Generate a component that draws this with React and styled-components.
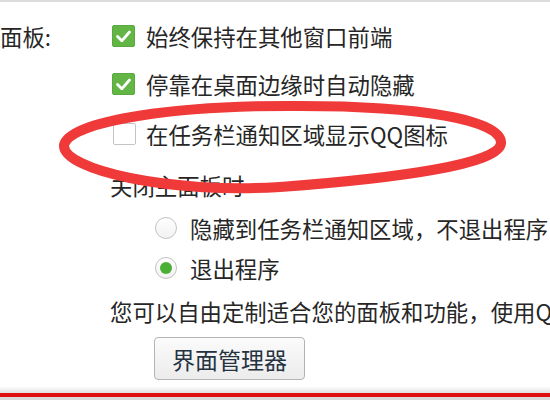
import React from "react";
import styled, { createGlobalStyle } from "styled-components";

const Global = createGlobalStyle`
  html, body { margin: 0; padding: 0; background: #fff; }
  body {
    font-family: "Noto Sans CJK SC", "Noto Sans", "Liberation Sans", sans-serif;
    color: #262626;
  }
`;

const Page = styled.div`
  position: relative;
  width: 550px;
  height: 400px;
  overflow: hidden;
  display: flex;
  flex-direction: column;
  background: #fff;
  border-top: 2px solid #dcdcdc;
  box-sizing: border-box;
`;

const Main = styled.div`
  flex: 1;
  display: grid;
  grid-template-columns: 110px 1fr;
  padding-top: 10px;
`;

const Label = styled.div`
  height: 48px;
  display: flex;
  align-items: center;
  font-size: 22.4px;
  line-height: 1;
  white-space: nowrap;
`;

const Content = styled.div`
  display: flex;
  flex-direction: column;
  min-width: 0;
  overflow: hidden;
`;

const Row = styled.div`
  height: ${(p) => p.$h}px;
  display: flex;
  align-items: center;
  padding-left: ${(p) => p.$indent || 0}px;
  font-size: 22.4px;
  line-height: 1;
  white-space: nowrap;
`;

const Text = styled.span`
  margin-left: ${(p) => p.$gap || 0}px;
`;

const Box = styled.span`
  width: 23px;
  height: 22px;
  box-sizing: border-box;
  border-radius: 2px;
  flex: none;
  display: flex;
  align-items: center;
  justify-content: center;
  background: ${(p) => (p.$checked ? "#63b546" : "#fff")};
  border: 1px solid ${(p) => (p.$checked ? "#5aa93e" : "#c4c4c4")};
`;

const Radio = styled.span`
  width: 22px;
  height: 22px;
  box-sizing: border-box;
  border-radius: 50%;
  flex: none;
  display: flex;
  align-items: center;
  justify-content: center;
  border: 1px solid #c2c2c2;
  background: linear-gradient(#ffffff, #f1f1f1);
`;

const Dot = styled.span`
  width: 12px;
  height: 12px;
  border-radius: 50%;
  background: #4caf35;
`;

const ButtonRow = styled.div`
  padding-left: 44px;
  padding-top: 5px;
`;

const Button = styled.button`
  width: 151px;
  height: 43px;
  border: 1px solid #b4b4b4;
  border-radius: 4px;
  background: linear-gradient(#fbfbfb, #ececec);
  font-family: "Noto Sans CJK SC", "Noto Sans", sans-serif;
  font-size: 23px;
  color: #253240;
  padding: 0;
  display: flex;
  align-items: center;
  justify-content: center;
`;

const Footer = styled.div`
  height: 14px;
  display: flex;
  flex-direction: column;
`;

const Shadow = styled.div`
  height: 7px;
  background: linear-gradient(#ffffff, #e2e2e2);
`;

const RedLine = styled.div`
  height: 4px;
  background: #e01010;
`;

const Under = styled.div`
  flex: 1;
  background: #dadada;
`;

const Overlay = styled.svg`
  position: absolute;
  left: 0;
  top: 0;
  pointer-events: none;
`;

function Check({ checked }) {
  return (
    <Box $checked={checked}>
      {checked && (
        <svg width="17" height="15" viewBox="0 0 17 15">
          <path d="M2.5 7.5 L6.8 11.8 L14.5 3" fill="none" stroke="#fff" strokeWidth="2.8" strokeLinecap="round" strokeLinejoin="round" />
        </svg>
      )}
    </Box>
  );
}

export default function App() {
  return (
    <>
      <Global />
      <Page>
        <Main>
          <div>
            <Label>面板:</Label>
          </div>
          <Content>
            <Row $h={48} $indent={2}>
              <Check checked />
              <Text $gap={11}>始终保持在其他窗口前端</Text>
            </Row>
            <Row $h={48} $indent={2}>
              <Check checked />
              <Text $gap={11}>停靠在桌面边缘时自动隐藏</Text>
            </Row>
            <Row $h={52} $indent={3}>
              <Check />
              <Text $gap={10}>在任务栏通知区域显示QQ图标</Text>
            </Row>
            <Row $h={50}>
              <Text>关闭主面板时</Text>
            </Row>
            <Row $h={36} $indent={45}>
              <Radio />
              <Text $gap={13}>隐藏到任务栏通知区域，不退出程序</Text>
            </Row>
            <Row $h={44} $indent={45}>
              <Radio>
                <Dot />
              </Radio>
              <Text $gap={13}>退出程序</Text>
            </Row>
            <Row $h={42}>
              <Text>您可以自由定制适合您的面板和功能，使用Q</Text>
            </Row>
            <ButtonRow>
              <Button>界面管理器</Button>
            </ButtonRow>
          </Content>
        </Main>
        <Footer>
          <Shadow />
          <RedLine />
          <Under />
        </Footer>
        <Overlay width="550" height="400" viewBox="0 0 550 400">
          <path
            d="M 64 143 C 70 118, 180 103, 300 104 C 420 104, 502 118, 501 141 C 500 162, 400 176, 280 185 C 170 192, 62 168, 64 143 Z"
            fill="none"
            stroke="#f03a3a"
            strokeWidth="10"
          />
        </Overlay>
      </Page>
    </>
  );
}
